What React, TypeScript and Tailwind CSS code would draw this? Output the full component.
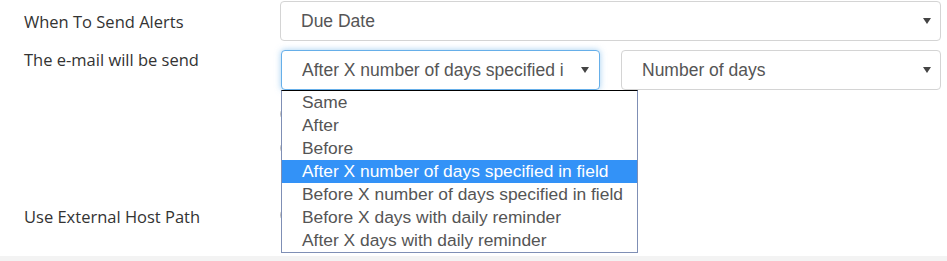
import React from "react";

const options = [
  "Same",
  "After",
  "Before",
  "After X number of days specified in field",
  "Before X number of days specified in field",
  "Before X days with daily reminder",
  "After X days with daily reminder",
];

function Caret() {
  return (
    <svg width="8" height="6" viewBox="0 0 8 6" className="shrink-0">
      <path d="M0 0 L8 0 L4 6 Z" fill="#444" />
    </svg>
  );
}

function Select({
  value,
  className,
  focused,
}: {
  value: string;
  className: string;
  focused?: boolean;
}) {
  return (
    <div
      className={
        "h-[40px] flex items-center pl-[20px] pr-[9px] rounded-[4px] border bg-white " +
        (focused
          ? "border-[#66afe9] shadow-[0_0_6px_rgba(102,175,233,0.6)] "
          : "border-[#d4d4d4] ") +
        className
      }
    >
      <span className="flex-1 truncate text-[17.5px] text-[#555] font-['Liberation_Sans',Arial,sans-serif]">
        {value}
      </span>
      <Caret />
    </div>
  );
}

export default function App() {
  return (
    <div className="w-[947px] h-[261px] bg-white flex flex-col overflow-hidden font-['Open_Sans',sans-serif]">
      <div className="flex-1 relative">
        <div className="flex items-center pt-[1px]">
          <div className="w-[280px] pl-[24px] pt-[2px] text-[16.5px] text-[#333]">When To Send Alerts</div>
          <Select value="Due Date" className="w-[661px]" />
        </div>

        <div className="flex items-start mt-[9px]">
          <div className="w-[281px] pl-[24px] leading-[20px] text-[16.5px] text-[#333]">
            The e-mail will be send
          </div>
          <Select
            value="After X number of days specified i"
            className="w-[319px] pr-[10px]"
            focused
          />
          <Select value="Number of days" className="w-[320px] ml-[21px]" />
        </div>

        <div className="flex flex-col pl-[280px] mt-[17px] gap-[20px]">
          <div className="w-[16px] h-[14px] rounded-full border border-[#bbb]" />
          <div className="w-[16px] h-[14px] rounded-full border border-[#bbb]" />
        </div>

        <div className="flex items-center mt-[46px]">
          <div className="w-[280px] pl-[24px] pt-[4px] text-[16.5px] text-[#333]">Use External Host Path</div>
          <div className="w-[16px] h-[16px] rounded-full border border-[#bbb]" />
        </div>

        <div className="absolute left-[281px] top-[90px] w-[357px] h-[163px] bg-white border border-[#7f8fb5] border-t-black flex flex-col font-['Liberation_Sans',Arial,sans-serif]">
          {options.map((o, i) => (
            <div
              key={o}
              className={
                "h-[23px] leading-[23px] pl-[20px] text-[17.4px] whitespace-nowrap " +
                (i === 3 ? "bg-[#3392f7] text-white" : "text-[#555]")
              }
            >
              {o}
            </div>
          ))}
        </div>
      </div>
      <div className="h-[5px] bg-[#f3f3f3]" />
    </div>
  );
}
